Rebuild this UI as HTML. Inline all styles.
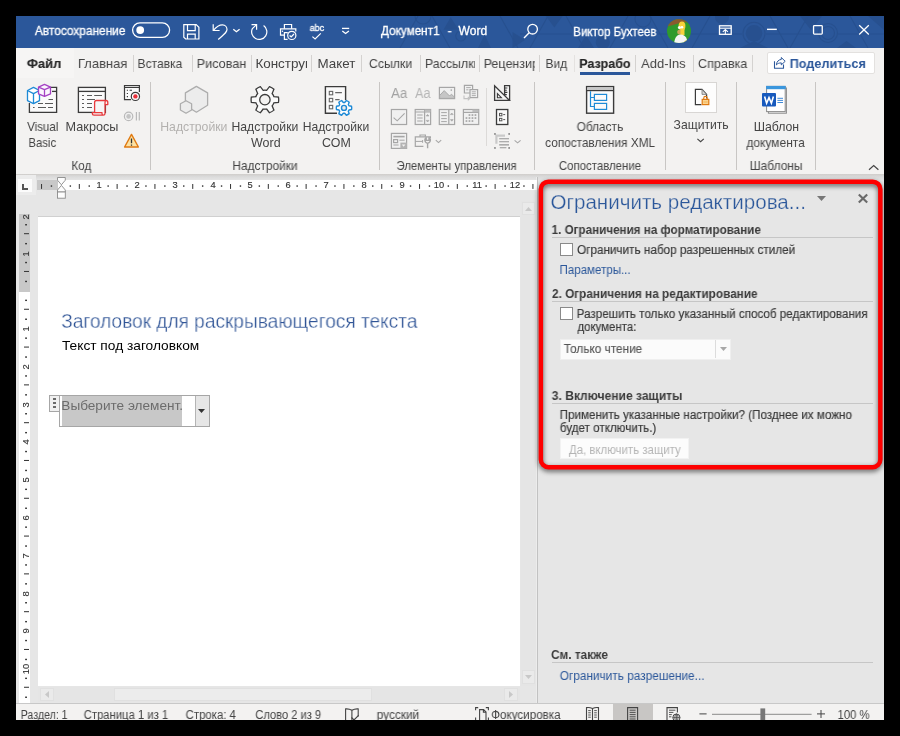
<!DOCTYPE html>
<html lang="ru"><head><meta charset="utf-8"><title>Word</title>
<style>
html,body{margin:0;padding:0;background:#000;}
body{width:900px;height:736px;overflow:hidden;font-family:"Liberation Sans",sans-serif;}
#root{position:relative;width:900px;height:736px;overflow:hidden;background:#000;}
#root div,#root span,#root svg{position:absolute;box-sizing:border-box;}
.t{will-change:transform;white-space:pre;line-height:1em;transform-origin:0 0;display:block;}
.clip{overflow:hidden;}
.vsep{width:1px;background:#c8c6c4;}
.tsep{width:1px;background:#d4d2d0;top:55px;height:17px;}
svg{overflow:visible;}
.rn{will-change:transform;font-size:9.3px;line-height:10px;height:10px;text-align:center;color:#333;display:block;-webkit-text-stroke:0.15px #333;}
.rv{transform:rotate(-90deg);transform-origin:50% 50%;}

</style></head>
<body>
<div id="root">
<!-- window -->
<div id="win" style="left:16px;top:16px;width:868px;height:704px;background:#e6e6e6;overflow:hidden"></div>
<!-- title bar -->
<div id="titlebar" style="left:16px;top:16px;width:868px;height:32px;background:#2b579a;overflow:hidden">
  <svg width="868" height="32" viewBox="16 16 868 32" style="left:0;top:0">
    <g fill="#27508f">
      <circle cx="754" cy="33.3" r="8.3"/>
      <path d="M443.5 29.7 L458.6 29.7 L450.7 17.2 Z"/>
      <path d="M478 48 L491 48 L484.6 34.8 Z"/>
      <path d="M512.5 32 L525 40 L512.5 48 Z"/>
      <path d="M545.9 16 L562.7 16 L554.3 27.6 Z"/>
      <circle cx="602.8" cy="42.4" r="7"/>
      <path d="M578 48 L594 48 L586 35 Z"/>
      <path d="M740 48 L768 48 L754 41 Z"/>
      <path d="M800 16 L822 16 L811 30 Z"/>
      <path d="M837 48 L856 48 L846.5 41 Z"/>
      <path d="M868 16 L884 16 L884 30 Z"/>
      <circle cx="722" cy="17" r="7"/>
    </g>
    <g fill="none" stroke="#27508f" stroke-width="1.1">
      <circle cx="828" cy="33" r="9.5"/><circle cx="828" cy="33" r="6.5"/>
      <circle cx="643" cy="19" r="8"/><circle cx="423" cy="16" r="8"/><circle cx="460.8" cy="36" r="5"/>
      <circle cx="754" cy="33.3" r="11"/>
      <path d="M400 48 L418 16 M432 16 L450 48 M500 16 L518 48 M530 48 L548 16 M566 16 L584 48 M610 48 L628 16 M650 16 L668 48 M692 48 L710 16 M770 16 L788 48 M790 48 L808 16 M850 16 L868 48 M520 34 L572 34 M656 34 L742 34 M766 34 L818 34 M838 34 L884 34"/>
    </g>
  </svg>
</div>
<!-- tab row + ribbon -->
<div id="ribbon" style="left:16px;top:48px;width:868px;height:126px;background:#f3f2f1"></div>
<div id="ribshadow" style="left:16px;top:174px;width:868px;height:6px;background:linear-gradient(#cfcdcb,#dcdcdc 50%,#e4e4e4)"></div>
<div id="filetab" style="left:16px;top:48px;width:58px;height:30px;background:#f6f5f4"></div>
<!-- tab separators -->
<div class="tsep" style="left:133px"></div>
<div class="tsep" style="left:192px"></div>
<div class="tsep" style="left:251px"></div>
<div class="tsep" style="left:311px"></div>
<div class="tsep" style="left:361px"></div>
<div class="tsep" style="left:420px"></div>
<div class="tsep" style="left:479px"></div>
<div class="tsep" style="left:539px"></div>
<div class="tsep" style="left:574px;background:#e4e2e0"></div>
<div class="tsep" style="left:635px"></div>
<div class="tsep" style="left:693px"></div>
<div class="tsep" style="left:752px"></div>
<!-- active tab underline -->
<div style="left:580px;top:72px;width:50px;height:3px;background:#2b579a"></div>
<!-- share button -->
<div style="left:767px;top:52px;width:108px;height:22px;background:#fff;border:1px solid #e3e1df;border-radius:2px"></div>
<!-- ribbon group separators -->
<div class="vsep" style="left:150px;top:82px;height:88px"></div>
<div class="vsep" style="left:379px;top:82px;height:88px"></div>
<div class="vsep" style="left:534px;top:82px;height:88px"></div>
<div class="vsep" style="left:665px;top:82px;height:88px"></div>
<div class="vsep" style="left:736px;top:82px;height:88px"></div>
<div class="vsep" style="left:815px;top:82px;height:88px"></div>
<div class="vsep" style="left:486px;top:88px;height:58px;background:#dcdad8"></div>
<!-- protect button box -->
<div style="left:685px;top:82px;width:32px;height:31px;background:#fdfdfd;border:1px solid #d8d6d4"></div>

<!-- document page -->
<div id="page" style="left:38px;top:216px;width:482px;height:470px;background:#fff;border-top:1px solid #d0d0d0"></div>
<!-- vertical scrollbar -->
<div style="left:521px;top:201px;width:15px;height:485px;background:#e5e5e5"></div>
<div style="left:522px;top:202px;width:13px;height:13px;background:#eaeaea;border:1px solid #e0e0e0"></div>
<div style="left:522px;top:670px;width:13px;height:14px;background:#eaeaea;border:1px solid #e0e0e0"></div>
<svg width="7" height="4" viewBox="0 0 7 4" style="left:525px;top:207px"><path d="M0 4 L3.5 0 L7 4Z" fill="#c8c8c8"/></svg>
<svg width="7" height="4" viewBox="0 0 7 4" style="left:525px;top:675px"><path d="M0 0 L3.5 4 L7 0Z" fill="#c8c8c8"/></svg>
<!-- horizontal scrollbar -->
<div style="left:38px;top:687px;width:482px;height:15px;background:#e5e5e5"></div>
<div style="left:40px;top:688px;width:14px;height:13px;background:#eaeaea;border:1px solid #e0e0e0"></div>
<div style="left:504px;top:688px;width:14px;height:13px;background:#eaeaea;border:1px solid #e0e0e0"></div>
<svg width="4" height="7" viewBox="0 0 4 7" style="left:45px;top:691px"><path d="M4 0 L0 3.5 L4 7Z" fill="#c8c8c8"/></svg>
<svg width="4" height="7" viewBox="0 0 4 7" style="left:509px;top:691px"><path d="M0 0 L4 3.5 L0 7Z" fill="#c8c8c8"/></svg>
<div style="left:114px;top:688px;width:258px;height:13px;background:#ececec;border:1px solid #e0e0e0"></div>
<!-- pane divider -->
<div style="left:536px;top:177px;width:1px;height:526px;background:#ececec"></div>
<div style="left:537px;top:177px;width:1px;height:526px;background:#c2c2c2"></div>

<!-- content control -->
<div style="left:59px;top:395px;width:151px;height:32px;background:#fff;border:1px solid #a6a6a6"></div>
<div style="left:62px;top:396px;width:120px;height:30px;background:#c8c8c8"></div>
<div style="left:195px;top:396px;width:14px;height:30px;background:#e6e6e6;border-left:1px solid #b4b4b4"></div>
<svg width="7" height="4" viewBox="0 0 7 4" style="left:198px;top:409px"><path d="M0 0 L7 0 L3.5 4Z" fill="#333"/></svg>
<div style="left:49px;top:395px;width:11px;height:17px;background:#f0f0f0;border:1px solid #a6a6a6"></div>
<div style="left:52.6px;top:398px;width:3px;height:2px;background:#6a6a6a"></div>
<div style="left:52.6px;top:402px;width:3px;height:2px;background:#6a6a6a"></div>
<div style="left:52.6px;top:406px;width:3px;height:2px;background:#6a6a6a"></div>

<!-- pane controls -->
<div style="left:552px;top:237px;width:321px;height:1px;background:#c6c6c6"></div>
<div style="left:552px;top:301px;width:321px;height:1px;background:#c6c6c6"></div>
<div style="left:552px;top:403px;width:321px;height:1px;background:#c6c6c6"></div>
<div style="left:552px;top:662px;width:321px;height:1px;background:#c6c6c6"></div>
<div style="left:560px;top:243px;width:13px;height:13px;background:#fff;border:1px solid #8a8a8a"></div>
<div style="left:560px;top:307px;width:13px;height:13px;background:#fff;border:1px solid #8a8a8a"></div>
<div style="left:560px;top:338.6px;width:171px;height:21px;background:#fbfbfb;border:1px solid #efefef"></div>
<div style="left:715px;top:340px;width:1px;height:18px;background:#dcdcdc"></div>
<svg width="7" height="4" viewBox="0 0 7 4" style="left:720px;top:347px"><path d="M0 0 L7 0 L3.5 4Z" fill="#a8a8a8"/></svg>
<div style="left:560.4px;top:437.5px;width:128.6px;height:21.8px;background:#fcfcfc;border:1px solid #f2f2f2"></div>
<!-- pane header glyphs -->
<svg width="9" height="5" viewBox="0 0 9 5" style="left:817px;top:196px"><path d="M0 0 L9 0 L4.5 5Z" fill="#777"/></svg>
<svg width="10" height="9" viewBox="0 0 10 9" style="left:858px;top:193.5px"><path d="M0.8 0.5 L9.2 8.5 M9.2 0.5 L0.8 8.5" stroke="#6a6a6a" stroke-width="2.15" fill="none"/></svg>

<!-- status bar -->
<div id="status" style="left:16px;top:703px;width:868px;height:17px;background:#f3f2f1;border-top:1px solid #c8c8c8"></div>
<div style="left:613px;top:704px;width:40px;height:16px;background:#c8c6c4"></div>

<div style="left:19px;top:214px;width:11px;height:77.5px;background:#c8c8c8"></div>
<div style="left:19px;top:291.5px;width:11px;height:411.5px;background:#fff"></div>
<div style="left:16px;top:175px;width:20px;height:20px;background:#ececec"></div>
<div style="left:18px;top:179px;width:14px;height:13px;background:#fbfbfb"></div>
<div style="left:22px;top:184px;width:1.8px;height:5.6px;background:#555"></div>
<div style="left:22px;top:188.1px;width:5.9px;height:1.5px;background:#555"></div>
<div style="left:37px;top:180px;width:21px;height:9.6px;background:#c8c8c8"></div>
<div style="left:58px;top:180px;width:479px;height:9.6px;background:#fff"></div>
<svg width="900" height="736" viewBox="0 0 900 736" style="left:0;top:0" fill="none">
<rect x="41.00" y="184" width="1.05" height="4.9" fill="#3a3a3a"/>
<rect x="50.75" y="185.3" width="1.4" height="1.5" fill="#3a3a3a"/>
<rect x="69.65" y="185.3" width="1.4" height="1.5" fill="#3a3a3a"/>
<rect x="78.80" y="184" width="1.05" height="4.9" fill="#3a3a3a"/>
<rect x="88.55" y="185.3" width="1.4" height="1.5" fill="#3a3a3a"/>
<rect x="107.45" y="185.3" width="1.4" height="1.5" fill="#3a3a3a"/>
<rect x="116.60" y="184" width="1.05" height="4.9" fill="#3a3a3a"/>
<rect x="126.35" y="185.3" width="1.4" height="1.5" fill="#3a3a3a"/>
<rect x="145.25" y="185.3" width="1.4" height="1.5" fill="#3a3a3a"/>
<rect x="154.40" y="184" width="1.05" height="4.9" fill="#3a3a3a"/>
<rect x="164.15" y="185.3" width="1.4" height="1.5" fill="#3a3a3a"/>
<rect x="183.05" y="185.3" width="1.4" height="1.5" fill="#3a3a3a"/>
<rect x="192.20" y="184" width="1.05" height="4.9" fill="#3a3a3a"/>
<rect x="201.95" y="185.3" width="1.4" height="1.5" fill="#3a3a3a"/>
<rect x="220.85" y="185.3" width="1.4" height="1.5" fill="#3a3a3a"/>
<rect x="230.00" y="184" width="1.05" height="4.9" fill="#3a3a3a"/>
<rect x="239.75" y="185.3" width="1.4" height="1.5" fill="#3a3a3a"/>
<rect x="258.65" y="185.3" width="1.4" height="1.5" fill="#3a3a3a"/>
<rect x="267.80" y="184" width="1.05" height="4.9" fill="#3a3a3a"/>
<rect x="277.55" y="185.3" width="1.4" height="1.5" fill="#3a3a3a"/>
<rect x="296.45" y="185.3" width="1.4" height="1.5" fill="#3a3a3a"/>
<rect x="305.60" y="184" width="1.05" height="4.9" fill="#3a3a3a"/>
<rect x="315.35" y="185.3" width="1.4" height="1.5" fill="#3a3a3a"/>
<rect x="334.25" y="185.3" width="1.4" height="1.5" fill="#3a3a3a"/>
<rect x="343.40" y="184" width="1.05" height="4.9" fill="#3a3a3a"/>
<rect x="353.15" y="185.3" width="1.4" height="1.5" fill="#3a3a3a"/>
<rect x="372.05" y="185.3" width="1.4" height="1.5" fill="#3a3a3a"/>
<rect x="381.20" y="184" width="1.05" height="4.9" fill="#3a3a3a"/>
<rect x="390.95" y="185.3" width="1.4" height="1.5" fill="#3a3a3a"/>
<rect x="409.85" y="185.3" width="1.4" height="1.5" fill="#3a3a3a"/>
<rect x="419.00" y="184" width="1.05" height="4.9" fill="#3a3a3a"/>
<rect x="428.75" y="185.3" width="1.4" height="1.5" fill="#3a3a3a"/>
<rect x="447.65" y="185.3" width="1.4" height="1.5" fill="#3a3a3a"/>
<rect x="456.80" y="184" width="1.05" height="4.9" fill="#3a3a3a"/>
<rect x="466.55" y="185.3" width="1.4" height="1.5" fill="#3a3a3a"/>
<rect x="485.45" y="185.3" width="1.4" height="1.5" fill="#3a3a3a"/>
<rect x="494.60" y="184" width="1.05" height="4.9" fill="#3a3a3a"/>
<rect x="504.35" y="185.3" width="1.4" height="1.5" fill="#3a3a3a"/>
<rect x="523.25" y="185.3" width="1.4" height="1.5" fill="#3a3a3a"/>
<rect x="532.40" y="184" width="1.05" height="4.9" fill="#3a3a3a"/>
<rect x="25.1" y="224.05" width="1.9" height="1.4" fill="#3a3a3a"/>
<rect x="24" y="233.15" width="5" height="1.05" fill="#3a3a3a"/>
<rect x="25.1" y="242.95" width="1.9" height="1.4" fill="#3a3a3a"/>
<rect x="25.1" y="261.85" width="1.9" height="1.4" fill="#3a3a3a"/>
<rect x="24" y="270.95" width="5" height="1.05" fill="#3a3a3a"/>
<rect x="25.1" y="280.75" width="1.9" height="1.4" fill="#3a3a3a"/>
<rect x="25.1" y="299.65" width="1.9" height="1.4" fill="#3a3a3a"/>
<rect x="24" y="308.75" width="5" height="1.05" fill="#3a3a3a"/>
<rect x="25.1" y="318.55" width="1.9" height="1.4" fill="#3a3a3a"/>
<rect x="25.1" y="337.45" width="1.9" height="1.4" fill="#3a3a3a"/>
<rect x="24" y="346.55" width="5" height="1.05" fill="#3a3a3a"/>
<rect x="25.1" y="356.35" width="1.9" height="1.4" fill="#3a3a3a"/>
<rect x="25.1" y="375.25" width="1.9" height="1.4" fill="#3a3a3a"/>
<rect x="24" y="384.35" width="5" height="1.05" fill="#3a3a3a"/>
<rect x="25.1" y="394.15" width="1.9" height="1.4" fill="#3a3a3a"/>
<rect x="25.1" y="413.05" width="1.9" height="1.4" fill="#3a3a3a"/>
<rect x="24" y="422.15" width="5" height="1.05" fill="#3a3a3a"/>
<rect x="25.1" y="431.95" width="1.9" height="1.4" fill="#3a3a3a"/>
<rect x="25.1" y="450.85" width="1.9" height="1.4" fill="#3a3a3a"/>
<rect x="24" y="459.95" width="5" height="1.05" fill="#3a3a3a"/>
<rect x="25.1" y="469.75" width="1.9" height="1.4" fill="#3a3a3a"/>
<rect x="25.1" y="488.65" width="1.9" height="1.4" fill="#3a3a3a"/>
<rect x="24" y="497.75" width="5" height="1.05" fill="#3a3a3a"/>
<rect x="25.1" y="507.55" width="1.9" height="1.4" fill="#3a3a3a"/>
<rect x="25.1" y="526.45" width="1.9" height="1.4" fill="#3a3a3a"/>
<rect x="24" y="535.55" width="5" height="1.05" fill="#3a3a3a"/>
<rect x="25.1" y="545.35" width="1.9" height="1.4" fill="#3a3a3a"/>
<rect x="25.1" y="564.25" width="1.9" height="1.4" fill="#3a3a3a"/>
<rect x="24" y="573.35" width="5" height="1.05" fill="#3a3a3a"/>
<rect x="25.1" y="583.15" width="1.9" height="1.4" fill="#3a3a3a"/>
<rect x="25.1" y="602.05" width="1.9" height="1.4" fill="#3a3a3a"/>
<rect x="24" y="611.15" width="5" height="1.05" fill="#3a3a3a"/>
<rect x="25.1" y="620.95" width="1.9" height="1.4" fill="#3a3a3a"/>
<rect x="25.1" y="639.85" width="1.9" height="1.4" fill="#3a3a3a"/>
<rect x="24" y="648.95" width="5" height="1.05" fill="#3a3a3a"/>
<rect x="25.1" y="658.75" width="1.9" height="1.4" fill="#3a3a3a"/>
<rect x="25.1" y="677.65" width="1.9" height="1.4" fill="#3a3a3a"/>
<rect x="24" y="686.75" width="5" height="1.05" fill="#3a3a3a"/>
<rect x="25.1" y="696.55" width="1.9" height="1.4" fill="#3a3a3a"/>
<path d="M57.5 177.5 H65.3 V180.2 L61.4 184.8 L57.5 180.2 Z" fill="#fdfdfd" stroke="#8a8a8a" stroke-width="0.9"/>
<path d="M61.4 185.4 L65.3 190 V192 H57.5 V190 Z" fill="#fdfdfd" stroke="#8a8a8a" stroke-width="0.9"/>
<rect x="57.5" y="192" width="7.8" height="6.2" fill="#fdfdfd" stroke="#8a8a8a" stroke-width="0.9"/>
</svg>
<span class="rn" style="left:89.20px;top:180.3px;width:20px">1</span>
<span class="rn" style="left:127.00px;top:180.3px;width:20px">2</span>
<span class="rn" style="left:164.80px;top:180.3px;width:20px">3</span>
<span class="rn" style="left:202.60px;top:180.3px;width:20px">4</span>
<span class="rn" style="left:240.40px;top:180.3px;width:20px">5</span>
<span class="rn" style="left:278.20px;top:180.3px;width:20px">6</span>
<span class="rn" style="left:316.00px;top:180.3px;width:20px">7</span>
<span class="rn" style="left:353.80px;top:180.3px;width:20px">8</span>
<span class="rn" style="left:391.60px;top:180.3px;width:20px">9</span>
<span class="rn" style="left:429.40px;top:180.3px;width:20px">10</span>
<span class="rn" style="left:467.20px;top:180.3px;width:20px">11</span>
<span class="rn" style="left:505.00px;top:180.3px;width:20px">12</span>
<span class="rn rv" style="left:15.60px;top:211.70px;width:20px">2</span>
<span class="rn rv" style="left:15.60px;top:248.90px;width:20px">1</span>
<span class="rn rv" style="left:15.60px;top:324.00px;width:20px">1</span>
<span class="rn rv" style="left:15.60px;top:361.80px;width:20px">2</span>
<span class="rn rv" style="left:15.60px;top:399.60px;width:20px">3</span>
<span class="rn rv" style="left:15.60px;top:437.40px;width:20px">4</span>
<span class="rn rv" style="left:15.60px;top:475.20px;width:20px">5</span>
<span class="rn rv" style="left:15.60px;top:513.00px;width:20px">6</span>
<span class="rn rv" style="left:15.60px;top:550.80px;width:20px">7</span>
<span class="rn rv" style="left:15.60px;top:588.60px;width:20px">8</span>
<span class="rn rv" style="left:15.60px;top:626.40px;width:20px">9</span>
<span class="rn rv" style="left:15.60px;top:664.20px;width:20px">10</span>
<svg id="ic-title" width="900" height="736" viewBox="0 0 900 736" style="left:0;top:0" fill="none" stroke="#fff" stroke-width="1.2" stroke-linecap="butt" stroke-linejoin="miter">
  <!-- autosave toggle -->
  <rect x="132.6" y="22.8" width="37" height="14.6" rx="7.3" stroke-width="1.3"/>
  <circle cx="140.2" cy="30.1" r="3.9" fill="#fff" stroke="none"/>
  <!-- save -->
  <path d="M183.8 24.6 H196.2 L198.9 27.3 V39 H185.6 L183.8 37.2 Z"/>
  <path d="M187.5 24.6 V30.6 H195.2 V24.6"/>
  <path d="M187.5 39 V34.2 H195.2 V39"/>
  <!-- undo -->
  <path d="M213.2 24.2 V30.5 H219.6"/>
  <path d="M213.4 30.3 C216 27.2 219 24.9 222.4 24.9 C225.4 24.9 227 27.2 227 29.6 C227 32.2 225 33.6 218.2 39.5"/>
  <path d="M233.3 29.2 L236.4 31.7 L239.6 29.2" stroke-width="1.3"/>
  <!-- redo -->
  <path d="M251.5 24.7 H256.6 V29.8"/>
  <path d="M263.6 25.6 A7.6 7.6 0 1 1 252.4 28.5 L256.4 24.9"/>
  <!-- print preview -->
  <path d="M284.4 28.7 V24.5 H291.6 V28.7"/>
  <path d="M284.4 35.2 H280.5 V28.8 H295.8 V31.4"/>
  <path d="M287.6 39.4 H284.4 V32.6 H287.8"/>
  <rect x="281.8" y="30.6" width="1.3" height="1.3" fill="#fff" stroke="none"/>
  <circle cx="291.8" cy="35.4" r="4.1"/>
  <path d="M289.6 35.5 L291.2 37 L294 34"/>
  <!-- abc check -->
  <path d="M312.4 36.6 L315.1 39 L320.8 33.4" stroke-width="1.2"/>
  <!-- customize QAT -->
  <path d="M342 28.4 H349.2" stroke-width="1.3"/>
  <path d="M342.3 30.9 L345.6 33.5 L348.9 30.9" stroke-width="1.3"/>
  <!-- search -->
  <circle cx="532.6" cy="29.2" r="4.8" stroke-width="1.3"/>
  <path d="M529.2 32.8 L524 38" stroke-width="1.4"/>
  <!-- ribbon display options -->
  <rect x="719.5" y="25.8" width="11.7" height="8.5" stroke-width="1.3"/>
  <path d="M719.5 28.2 H731.2" stroke-width="1.1"/>
  <path d="M725.35 34 V29.8 M722.8 31.9 L725.35 29.6 L727.9 31.9" stroke-width="1.1"/>
  <!-- min / max / close -->
  <path d="M767 29.35 H776.8" stroke-width="1.4"/>
  <rect x="813.55" y="25.55" width="8.7" height="8.5" rx="0.8" stroke-width="1.3"/>
  <path d="M859.2 25.2 L868.8 34.5 M868.8 25.2 L859.2 34.5" stroke-width="1.3"/>
</svg>
<!-- avatar -->
<svg width="24" height="24" viewBox="667 19 24 24" style="left:667px;top:19px">
  <defs><clipPath id="avc"><circle cx="679" cy="31" r="12"/></clipPath></defs>
  <g clip-path="url(#avc)">
    <rect x="667" y="19" width="24" height="24" fill="#2e9a2c"/>
    <path d="M667 19 H691 V23 Q684 21.2 678 23.6 Q672 25.6 667 26.6 Z" fill="#8a5a2e"/>
    <ellipse cx="682" cy="26" rx="3.4" ry="4.6" fill="#f6d13a"/>
    <ellipse cx="680.2" cy="32" rx="3" ry="2.6" fill="#c8a55a"/>
    <rect x="680.5" y="29" width="4" height="6" fill="#f6d13a"/>
    <circle cx="679.4" cy="27.4" r="1.5" fill="#fff"/>
    <circle cx="682" cy="27.2" r="1.3" fill="#fff"/>
    <path d="M674 43 Q675 35 680 34.5 Q686 34.5 687 40 L687 43 Z" fill="#f4f4f4"/>
    <path d="M683.5 43 Q684 40.5 686.8 40 L687 43Z" fill="#f6d13a"/>
  </g>
</svg>

<svg id="ic-ribbon" width="900" height="736" viewBox="0 0 900 736" style="left:0;top:0" fill="none" stroke-linecap="butt" stroke-linejoin="miter">
<g stroke="#3b3b3b" stroke-width="1.3">
<path d="M40 87.4 H56.6 V112.4 H29.4 V103" fill="#fafafa"/>
<path d="M52 91.4 H56.6"/>
<path d="M48.5 99.5 H53 M38 103.5 H43 M45 103.5 H53 M33 107.5 H34.6 M38 107.5 H46 M48 107.5 H53" stroke="#5a5a5a" stroke-width="1.1"/>
</g>
<g stroke="#1e8ad6" stroke-width="1.3" stroke-linejoin="round">
<path d="M33.5 87.4 L39.5 90.5 V100.7 L33.5 103.6 L27.5 100.7 V90.5 Z" fill="#fff"/>
<path d="M27.5 90.5 L33.5 93.6 L39.5 90.5 M33.5 93.6 V103.6"/>
</g>
<g stroke="#a542c4" stroke-width="1.3" stroke-linejoin="round">
<path d="M44.5 84.3 L50.5 87.1 V93.9 L44.5 96.4 L38.5 93.9 V87.1 Z" fill="#fbf6fd"/>
<path d="M38.5 87.1 L44.5 89.7 L50.5 87.1 M44.5 89.7 V96.4"/>
</g>
<g stroke="#3b3b3b" stroke-width="1.3">
<rect x="78.4" y="87.4" width="27" height="25" fill="#fafafa"/>
<path d="M78.4 91.4 H105.4"/>
<path d="M82 95.5 H84 M87 95.5 H92 M94.2 95.5 H102 M82 99.5 H84 M87 99.5 H95 M82 103.5 H84 M87 103.5 H92 M82 107.5 H84 M87 107.5 H92" stroke="#5a5a5a" stroke-width="1.1"/>
</g>
<g stroke="#e8393c" stroke-width="1.3" stroke-linejoin="round">
<path d="M94.6 112.6 V102.4 Q94.6 100.5 96.5 100.5 H106 Q107.8 100.5 107.8 102.4 V104.6 H105 V113.4 Q105 115.2 103.2 115.2 H94 Q92.3 115.2 92.3 113.6 V112.6 H102 V113.6 Q102 115.2 103.2 115.2" fill="#f7f5f5"/>
<path d="M105 104.6 V102.4 Q105 100.5 106 100.5"/>
</g>
<g stroke="#3b3b3b" stroke-width="1.2">
<path d="M131 99.6 H124.5 V85.5 H139.4 V92" fill="#fafafa"/>
<path d="M124.5 87.4 H139.4"/>
<path d="M126.8 90.3 H128 M129.6 90.3 H132 M126.8 93.5 H128 M126.8 96.6 H128" stroke-width="1.1"/>
<circle cx="135.4" cy="96.4" r="4.1" fill="#fff"/>
<circle cx="135.4" cy="96.4" r="2.2" fill="#e8303a" stroke="none"/>
</g>
<g stroke="#b9b9b9" stroke-width="1.2">
<circle cx="128.6" cy="116.4" r="4.2" fill="#f0f0f0"/>
<circle cx="128.6" cy="116.4" r="2.3" fill="#c4c4c4" stroke="none"/>
<path d="M136.4 112 V120.6 M139.3 112 V120.6"/>
</g>
<path d="M131.5 134.4 L138.4 147 H124.6 Z" fill="#fbe2a4" stroke="#e07a12" stroke-width="1.4" stroke-linejoin="round"/>
<path d="M131.5 138.6 V143.2 M131.5 144.4 V145.8" stroke="#333" stroke-width="1.3"/>
<g stroke="#adadad" stroke-width="1.3" fill="#ececec" stroke-linejoin="round">
<path d="M196.4 86.4 L207.6 92.9 V105.3 L196.4 112.2 L185.4 105.3 V92.9 Z"/>
<path d="M186 100.7 L191.6 103.8 V110 L186 113.2 L180.4 110 V103.8 Z"/>
</g>
<path d="M273.86 96.53 L278.45 97.09 A13.80 13.80 0 0 1 278.45 102.31 L273.86 102.87 A9.50 9.50 0 0 1 272.12 105.87 L273.93 110.13 A13.80 13.80 0 0 1 269.42 112.74 L266.63 109.04 A9.50 9.50 0 0 1 263.17 109.04 L260.38 112.74 A13.80 13.80 0 0 1 255.87 110.13 L257.68 105.87 A9.50 9.50 0 0 1 255.94 102.87 L251.35 102.31 A13.80 13.80 0 0 1 251.35 97.09 L255.94 96.53 A9.50 9.50 0 0 1 257.68 93.53 L255.87 89.27 A13.80 13.80 0 0 1 260.38 86.66 L263.17 90.36 A9.50 9.50 0 0 1 266.63 90.36 L269.42 86.66 A13.80 13.80 0 0 1 273.93 89.27 L272.12 93.53 A9.50 9.50 0 0 1 273.86 96.53 Z" fill="#fafafa" stroke="#3b3b3b" stroke-width="1.3" stroke-linejoin="miter"/>
<circle cx="264.9" cy="99.7" r="5.2" fill="#f3f2f1" stroke="#3b3b3b" stroke-width="1.3"/>
<path d="M337 113.2 H325.4 V86.6 H345.6 V100" fill="#fafafa" stroke="#3b3b3b" stroke-width="1.4"/>
<g stroke="#666" stroke-width="1.1">
<rect x="329.3" y="91.4" width="3.4" height="3.4"/><rect x="329.3" y="98.4" width="3.4" height="3.4"/><rect x="329.3" y="105.4" width="3.4" height="3.4"/>
<path d="M335.2 92.6 H341.9 M335.2 99.6 H339.6"/>
</g>
<path d="M348.97 105.80 L351.53 106.29 A7.70 7.70 0 0 1 351.53 109.51 L348.97 110.00 A5.40 5.40 0 0 1 348.31 111.16 L349.16 113.62 A7.70 7.70 0 0 1 346.38 115.22 L344.67 113.26 A5.40 5.40 0 0 1 343.33 113.26 L341.62 115.22 A7.70 7.70 0 0 1 338.84 113.62 L339.69 111.16 A5.40 5.40 0 0 1 339.03 110.00 L336.47 109.51 A7.70 7.70 0 0 1 336.47 106.29 L339.03 105.80 A5.40 5.40 0 0 1 339.69 104.64 L338.84 102.18 A7.70 7.70 0 0 1 341.62 100.58 L343.33 102.54 A5.40 5.40 0 0 1 344.67 102.54 L346.38 100.58 A7.70 7.70 0 0 1 349.16 102.18 L348.31 104.64 A5.40 5.40 0 0 1 348.97 105.80 Z" fill="#fdfdfd" stroke="#1e8ad6" stroke-width="1.4" stroke-linejoin="round"/>
<circle cx="344" cy="107.9" r="2.5" fill="#eaeaea" stroke="#1e8ad6" stroke-width="1.4"/>
<g stroke="#a6a6a6" stroke-width="1.2" fill="none">
<rect x="439.4" y="87.4" width="15.2" height="11.2" fill="#f0f0f0"/>
<path d="M439.6 95.5 L444.2 90.6 L449.6 96 L451.4 94.2 L454.4 97 V98.4 H439.6 Z" fill="#c6c6c6" stroke-width="0.9"/>
<rect x="450.6" y="89.4" width="1.4" height="1.4" fill="#a6a6a6" stroke="none"/>
<path d="M469.8 93 H464.4 V85.4 H472.6 V89.4" fill="#f0f0f0"/>
<path d="M466.2 87.6 H470.8 M466.2 89.8 H468.4" stroke-width="0.9"/>
<rect x="470" y="89.6" width="7.6" height="8" fill="#f0f0f0"/>
<path d="M471.8 91.8 H475.8 M471.8 93.7 H475.8 M471.8 95.6 H475.8" stroke-width="0.9"/>
<path d="M464 95.4 V98.6 H469.6 M467.8 96.8 L469.8 98.6 L467.8 100.4" stroke="#c2c2c2" stroke-width="1.1"/>
<rect x="391.4" y="109.5" width="15.2" height="15" fill="#f0f0f0"/>
<path d="M393.6 117.6 L397.2 120.8 L404.6 113.4" stroke-width="1.1"/>
<rect x="415.2" y="109.5" width="15.4" height="15" fill="#f0f0f0"/>
<path d="M415.2 112 H430.6 M424.6 109.5 V124.5"/>
<rect x="424.8" y="109.6" width="5.6" height="2.4" fill="#bdbdbd" stroke="none"/>
<path d="M417.2 115 H422.6 M417.2 118 H422.6 M417.2 121 H422.6" stroke-width="1"/>
<path d="M426.2 116 L427.6 114.4 L429 116 Z M426.2 120.4 L427.6 122 L429 120.4 Z" fill="#a6a6a6" stroke-width="0.6"/>
<rect x="439.3" y="109.5" width="15.3" height="15" fill="#f0f0f0"/>
<path d="M448.8 109.5 V124.5"/>
<path d="M441.2 112.6 H446.8 M441.2 115.6 H446.8 M441.2 118.6 H446.8 M441.2 121.6 H446.8" stroke-width="1"/>
<path d="M450.4 114.6 L451.8 113 L453.2 114.6 Z M450.4 119.6 L451.8 121.2 L453.2 119.6 Z" fill="#a6a6a6" stroke-width="0.6"/>
<rect x="463.4" y="109.5" width="15.3" height="15" fill="#f0f0f0"/>
<path d="M463.4 112.4 H478.7"/>
<rect x="472.4" y="109.6" width="6" height="2.6" fill="#bdbdbd" stroke="none"/>
<rect x="468.6" y="114.2" width="1.7" height="1.7" fill="#a6a6a6" stroke="none"/>
<rect x="471.6" y="114.2" width="1.7" height="1.7" fill="#a6a6a6" stroke="none"/>
<rect x="474.6" y="114.2" width="1.7" height="1.7" fill="#a6a6a6" stroke="none"/>
<rect x="465.6" y="117.2" width="1.7" height="1.7" fill="#a6a6a6" stroke="none"/>
<rect x="468.6" y="117.2" width="1.7" height="1.7" fill="#a6a6a6" stroke="none"/>
<rect x="471.6" y="117.2" width="1.7" height="1.7" fill="#a6a6a6" stroke="none"/>
<rect x="474.6" y="117.2" width="1.7" height="1.7" fill="#a6a6a6" stroke="none"/>
<rect x="465.6" y="120.2" width="1.7" height="1.7" fill="#a6a6a6" stroke="none"/>
<rect x="468.6" y="120.2" width="1.7" height="1.7" fill="#a6a6a6" stroke="none"/>
<rect x="471.6" y="120.2" width="1.7" height="1.7" fill="#a6a6a6" stroke="none"/>
<rect x="391.4" y="133.4" width="15.2" height="15" fill="#f0f0f0"/>
<path d="M393.4 136.6 H404.6" stroke-width="1.6"/>
<rect x="393.6" y="139.6" width="4" height="3"/>
<path d="M393.4 145 H398.6 M399.4 140.2 H404.6" stroke-width="1"/>
<rect x="400.4" y="142.6" width="6.4" height="6" fill="#b4b4b4" stroke="none"/>
<path d="M401.8 144.4 H405.4 L403.6 146.8 Z" fill="#f3f2f1" stroke="none"/>
<path d="M423.4 146.4 H415.3 V136.8 H430.4 V138"/>
<path d="M420 136.8 V135 H425.4 V136.8"/>
<path d="M415.3 141.4 H422.6 M422.6 140 V142.8" stroke-width="1"/>
<path d="M427.6 148.2 V143.4 Q424.6 142.4 424.9 139.6 Q425.1 138.2 426.2 137.6 V140.4 H429 V137.6 Q430.2 138.2 430.4 139.6 Q430.6 142.4 427.6 143.4" stroke-width="1.4" stroke-linejoin="round"/>
<path d="M435.8 140.1 L438.5 142.6 L441.2 140.1" stroke-width="1.1"/>
<path d="M499.2 138.7 H509 M499.2 141.8 H509 M499.2 144.9 H509 M499.8 147.7 H506.4" stroke="#959595" stroke-width="1.1"/>
<path d="M505 135.6 H496.4 V143.8" stroke="#c9c9c9" stroke-width="2.2"/>
<rect x="494.1" y="133.1" width="1.7" height="1.7" fill="#8a8a8a" stroke="none"/>
<rect x="508.3" y="133.1" width="1.7" height="1.7" fill="#8a8a8a" stroke="none"/>
<rect x="494.1" y="147.1" width="1.7" height="1.7" fill="#8a8a8a" stroke="none"/>
<rect x="508.3" y="147.1" width="1.7" height="1.7" fill="#8a8a8a" stroke="none"/>
<path d="M514.6 140.4 L517.6 142.9 L520.6 140.4" stroke-width="1.1"/>
</g>
<g stroke="#3b3b3b" stroke-width="1.3" stroke-linejoin="miter">
<path d="M504.6 95.6 V85.6 H509.6 V100.4" fill="#fafafa"/>
<path d="M504.6 88 H507.4 M504.6 90.2 H506.8 M504.6 92.4 H507.4 M504.6 94.6 H506.8" stroke-width="1.1"/>
<path d="M494.6 85.8 V100.4 H509.4 Z" fill="#f6f6f6"/>
<path d="M497.4 93.6 V97.7 H501.4 Z" stroke-width="1.1"/>
</g>
<rect x="496.5" y="109.5" width="11.3" height="15" fill="#fafafa" stroke="#3b3b3b" stroke-width="1.3"/>
<g stroke="#555" stroke-width="1"><rect x="499.5" y="113.4" width="2.4" height="2.4"/><rect x="499.5" y="118.4" width="2.4" height="2.4"/><path d="M503.2 114.6 H505.2 M503.2 119.6 H505.2"/></g>
<rect x="586.6" y="86.6" width="27" height="26.6" fill="#fafafa" stroke="#3b3b3b" stroke-width="1.4"/>
<rect x="587.3" y="87.3" width="25.6" height="2.8" fill="#c8c8c8"/>
<path d="M586.6 90.6 H613.6" stroke="#3b3b3b" stroke-width="1.2"/>
<g stroke="#1e8ad6" stroke-width="1.2"><path d="M590.5 91.2 V106.5 H594.4 M590.5 97.5 H594.4"/><rect x="594.4" y="94.4" width="12.2" height="6"/><rect x="594.4" y="103.4" width="12.2" height="6"/></g>
<path d="M701.4 104.6 H695.4 V89.4 H702 L706.6 94.4 V98.6" stroke="#3b3b3b" stroke-width="1.2"/>
<path d="M702 89.4 V94.4 H706.6 Z" fill="#d6d6d6" stroke="#777" stroke-width="0.8"/>
<rect x="702.2" y="99.4" width="6.6" height="5.2" fill="#fbd591" stroke="#e07a12" stroke-width="1.2"/>
<path d="M703.7 99.4 V98.2 A1.8 1.8 0 0 1 707.3 98.2 V99.4" stroke="#e07a12" stroke-width="1.1"/>
<path d="M703.4 102 H707.6" stroke="#f0a848" stroke-width="0.8"/>
<path d="M697.4 138.9 L700.6 141.6 L703.8 138.9" stroke="#444" stroke-width="1.2"/>
<rect x="768.4" y="88" width="18" height="25.2" fill="#f4f4f4" stroke="#8a8a8a" stroke-width="1"/>
<rect x="766.6" y="86.4" width="18.6" height="25.2" fill="#fff" stroke="#8a8a8a" stroke-width="1"/>
<rect x="766.1" y="85.9" width="19.6" height="3.3" fill="#3a96dd"/>
<path d="M777.4 98.3 H783 M777.4 100.4 H783 M777.4 102.5 H783" stroke="#2b7cd3" stroke-width="0.9"/>
<rect x="762" y="93" width="14" height="13.6" rx="1" fill="#185abd"/>
<path d="M764.6 96.4 L766.6 103.2 L769 97.6 L771.4 103.2 L773.4 96.4" stroke="#fff" stroke-width="1.6" stroke-linejoin="miter" fill="none"/>
<path d="M869 169.8 L873.7 165.6 L878.4 169.8" stroke="#444" stroke-width="1.2"/>
<g stroke="#2b579a" stroke-width="1.1" stroke-linejoin="round"><path d="M774.5 61.2 V68.3 H783.5 V64.4"/><path d="M776.4 64.9 C776.6 61.6 778.6 59.7 781.3 59.4 V57.5 L785.2 61.3 L781.3 64.9 V62.9 C779 62.9 777.6 63.5 776.4 64.9 Z" stroke-width="1"/></g>
</svg>
<span class="t" id="t0" style="left:34px;top:24.90px;font-size:12.0px;color:#fff;transform:translateX(0.84px) scaleX(0.9916);-webkit-text-stroke:0.3px #fff;">Автосохранение</span>
<span class="t" id="t1" style="left:380px;top:25.00px;font-size:12.0px;color:#fff;transform:translateX(0.98px) scaleX(0.9779);-webkit-text-stroke:0.3px #fff;">Документ1</span>
<span class="t" id="t2" style="left:447px;top:25.00px;font-size:12.0px;color:#fff;transform:translateX(0.66px) scaleX(0.9831);-webkit-text-stroke:0.3px #fff;">-</span>
<span class="t" id="t3" style="left:458px;top:25.00px;font-size:12.0px;color:#fff;transform:translateX(0.58px) scaleX(1.0023);-webkit-text-stroke:0.3px #fff;">Word</span>
<span class="t" id="t4" style="left:573px;top:25.80px;font-size:12.2px;color:#fff;transform:translateX(0.16px) scaleX(0.9468);-webkit-text-stroke:0.3px #fff;">Виктор Бухтеев</span>
<span class="t" id="t5" style="left:309px;top:22.90px;font-size:9.5px;color:#fff;transform:translateX(0.62px) scaleX(0.9558);-webkit-text-stroke:0.3px #fff;">abc</span>
<span class="t" id="t6" style="left:26px;top:56.50px;font-size:13px;color:#262626;transform:translateX(0.86px) scaleX(0.9970);-webkit-text-stroke:0.15px #262626;font-weight:bold;">Файл</span>
<span class="t" id="t7" style="left:77px;top:56.50px;font-size:13px;color:#444444;transform:translateX(0.90px) scaleX(0.9977);">Главная</span>
<span class="t" id="t8" style="left:137px;top:56.50px;font-size:13px;color:#444444;transform:translateX(0.46px) scaleX(0.9297);">Вставка</span>
<span class="t" id="t9" style="left:196px;top:56.50px;font-size:13px;color:#444444;transform:translateX(0.65px) scaleX(0.9748);">Рисован</span>
<div class="clip" style="left:0;top:0;width:307px;height:736px"><span class="t" id="t10" style="left:255px;top:56.50px;font-size:13px;color:#444444;transform:translateX(0.40px) scaleX(1.0335);">Конструк</span></div>
<span class="t" id="t11" style="left:317px;top:56.50px;font-size:13px;color:#444444;transform:translateX(0.40px) scaleX(1.0298);">Макет</span>
<span class="t" id="t12" style="left:368px;top:56.50px;font-size:13px;color:#444444;transform:translateX(0.93px) scaleX(0.9460);">Ссылки</span>
<div class="clip" style="left:0;top:0;width:475px;height:736px"><span class="t" id="t13" style="left:424px;top:56.50px;font-size:13px;color:#444444;transform:translateX(0.91px) scaleX(0.9521);">Рассылки</span></div>
<div class="clip" style="left:0;top:0;width:535px;height:736px"><span class="t" id="t14" style="left:483px;top:56.50px;font-size:13px;color:#444444;transform:translateX(0.70px) scaleX(0.9611);">Рецензир</span></div>
<span class="t" id="t15" style="left:545px;top:56.50px;font-size:13px;color:#444444;transform:translateX(0.51px) scaleX(0.9173);">Вид</span>
<span class="t" id="t16" style="left:579px;top:56.50px;font-size:13px;color:#262626;transform:translateX(0.26px) scaleX(0.9589);-webkit-text-stroke:0.15px #262626;font-weight:bold;">Разрабо</span>
<span class="t" id="t17" style="left:641px;top:56.50px;font-size:13px;color:#444444;transform:translateX(0.16px) scaleX(0.9926);">Add-Ins</span>
<span class="t" id="t18" style="left:697px;top:56.50px;font-size:13px;color:#444444;transform:translateX(0.95px) scaleX(0.9676);">Справка</span>
<span class="t" id="t19" style="left:789px;top:56.60px;font-size:13px;color:#2b579a;transform:translateX(0.69px) scaleX(0.9756);font-weight:bold;">Поделиться</span>
<span class="t" id="t20" style="left:27px;top:121.00px;font-size:12.1px;color:#444444;transform:translateX(0.17px) scaleX(0.9535);">Visual</span>
<span class="t" id="t21" style="left:28px;top:136.70px;font-size:12.1px;color:#444444;transform:translateX(0.45px) scaleX(0.9368);">Basic</span>
<span class="t" id="t22" style="left:65px;top:121.00px;font-size:12.1px;color:#444444;transform:translateX(0.62px) scaleX(1.0466);">Макросы</span>
<span class="t" id="t23" style="left:160px;top:121.00px;font-size:12.1px;color:#b3b1af;transform:translateX(0.27px) scaleX(1.0123);">Надстройки</span>
<span class="t" id="t24" style="left:231px;top:121.00px;font-size:12.1px;color:#444444;transform:translateX(0.49px) scaleX(1.0067);">Надстройки</span>
<span class="t" id="t25" style="left:251px;top:136.70px;font-size:12.1px;color:#444444;transform:translateX(0.06px) scaleX(1.0298);">Word</span>
<span class="t" id="t26" style="left:302px;top:121.00px;font-size:12.1px;color:#444444;transform:translateX(0.70px) scaleX(1.0014);">Надстройки</span>
<span class="t" id="t27" style="left:321px;top:136.70px;font-size:12.1px;color:#444444;transform:translateX(0.92px) scaleX(1.0242);">COM</span>
<span class="t" id="t28" style="left:576px;top:121.00px;font-size:12.1px;color:#444444;transform:translateX(0.65px) scaleX(0.9811);">Область</span>
<span class="t" id="t29" style="left:545px;top:136.70px;font-size:12.1px;color:#444444;transform:translateX(0.13px) scaleX(0.9767);">сопоставления XML</span>
<span class="t" id="t30" style="left:673px;top:119.00px;font-size:12.1px;color:#444444;transform:translateX(0.56px) scaleX(1.0036);">Защитить</span>
<span class="t" id="t31" style="left:753px;top:121.00px;font-size:12.1px;color:#444444;transform:translateX(0.63px) scaleX(1.0153);">Шаблон</span>
<span class="t" id="t32" style="left:746px;top:136.70px;font-size:12.1px;color:#444444;transform:translateX(0.45px) scaleX(0.9894);">документа</span>
<span class="t" id="t33" style="left:391px;top:86.70px;font-size:13.8px;color:#a2a2a2;transform:translateX(0.06px) scaleX(0.9562);">Aa</span>
<span class="t" id="t34" style="left:415px;top:86.70px;font-size:13.8px;color:#b6b6b6;transform:translateX(0.06px) scaleX(0.9130);">Aa</span>
<span class="t" id="t35" style="left:71px;top:159.70px;font-size:12.1px;color:#444444;transform:translateX(0.40px) scaleX(0.9681);">Код</span>
<span class="t" id="t36" style="left:232px;top:159.70px;font-size:12.1px;color:#444444;transform:translateX(0.37px) scaleX(0.9842);">Надстройки</span>
<span class="t" id="t37" style="left:396px;top:159.70px;font-size:12.1px;color:#444444;transform:translateX(0.49px) scaleX(0.9435);">Элементы управления</span>
<span class="t" id="t38" style="left:558px;top:159.70px;font-size:12.1px;color:#444444;transform:translateX(0.85px) scaleX(0.9455);">Сопоставление</span>
<span class="t" id="t39" style="left:749px;top:159.70px;font-size:12.1px;color:#444444;transform:translateX(0.69px) scaleX(0.9887);">Шаблоны</span>
<span class="t" id="t40" style="left:61px;top:312.40px;font-size:19.5px;color:#2f5496;transform:translateX(0.26px) scaleX(0.9788);-webkit-text-stroke:0.3px #fff;">Заголовок для раскрывающегося текста</span>
<span class="t" id="t41" style="left:62px;top:339.70px;font-size:12.7px;color:#000;transform:translateX(0.00px) scaleX(1.0820);">Текст под заголовком</span>
<span class="t" id="t42" style="left:61px;top:399.00px;font-size:13.2px;color:#6c6c6c;transform:translateX(0.33px) scaleX(1.0310);">Выберите элемент.</span>
<span class="t" id="t43" style="left:550px;top:193.00px;font-size:19.5px;color:#2b579a;transform:translateX(0.44px) scaleX(1.0549);-webkit-text-stroke:0.25px #e6e6e6;">Ограничить редактирова...</span>
<span class="t" id="t44" style="left:551px;top:224.00px;font-size:12.5px;color:#3b3b3b;transform:translateX(0.61px) scaleX(0.9324);font-weight:bold;">1. Ограничения на форматирование</span>
<span class="t" id="t45" style="left:577px;top:244.00px;font-size:12.5px;color:#3a3a3a;transform:translateX(0.07px) scaleX(0.9373);-webkit-text-stroke:0.18px #3a3a3a;">Ограничить набор разрешенных стилей</span>
<span class="t" id="t46" style="left:559px;top:264.00px;font-size:12.5px;color:#2b579a;transform:translateX(0.49px) scaleX(0.9232);">Параметры...</span>
<span class="t" id="t47" style="left:551px;top:288.00px;font-size:12.5px;color:#3b3b3b;transform:translateX(1.00px) scaleX(0.9417);font-weight:bold;">2. Ограничения на редактирование</span>
<span class="t" id="t48" style="left:576px;top:307.60px;font-size:12.5px;color:#3a3a3a;transform:translateX(0.64px) scaleX(0.9325);-webkit-text-stroke:0.18px #3a3a3a;">Разрешить только указанный способ редактирования</span>
<span class="t" id="t49" style="left:577px;top:321.00px;font-size:12.5px;color:#3a3a3a;transform:translateX(0.45px) scaleX(0.9145);-webkit-text-stroke:0.18px #3a3a3a;">документа:</span>
<span class="t" id="t50" style="left:563px;top:343.10px;font-size:12.5px;color:#555;transform:translateX(0.73px) scaleX(0.9453);-webkit-text-stroke:0.12px #555;">Только чтение</span>
<span class="t" id="t51" style="left:551px;top:390.00px;font-size:12.5px;color:#3b3b3b;transform:translateX(0.72px) scaleX(0.9650);font-weight:bold;">3. Включение защиты</span>
<span class="t" id="t52" style="left:559px;top:409.00px;font-size:12.5px;color:#3a3a3a;transform:translateX(0.63px) scaleX(0.9319);-webkit-text-stroke:0.18px #3a3a3a;">Применить указанные настройки? (Позднее их можно</span>
<span class="t" id="t53" style="left:559px;top:422.00px;font-size:12.5px;color:#3a3a3a;transform:translateX(0.84px) scaleX(0.9318);-webkit-text-stroke:0.18px #3a3a3a;">будет отключить.)</span>
<span class="t" id="t54" style="left:568px;top:443.50px;font-size:12.5px;color:#b4b4b4;transform:translateX(0.90px) scaleX(0.9143);">Да, включить защиту</span>
<span class="t" id="t55" style="left:550px;top:648.60px;font-size:12.5px;color:#3b3b3b;transform:translateX(1.00px) scaleX(0.9459);font-weight:bold;">См. также</span>
<span class="t" id="t56" style="left:559px;top:669.60px;font-size:12.5px;color:#2b579a;transform:translateX(0.76px) scaleX(0.9464);">Ограничить разрешение...</span>
<span class="t" id="t57" style="left:20px;top:709.20px;font-size:12.0px;color:#444444;transform:translateX(0.71px) scaleX(0.8835);">Раздел: 1</span>
<span class="t" id="t58" style="left:83px;top:709.20px;font-size:12.0px;color:#444444;transform:translateX(0.71px) scaleX(0.9394);">Страница 1 из 1</span>
<span class="t" id="t59" style="left:185px;top:709.20px;font-size:12.0px;color:#444444;transform:translateX(0.59px) scaleX(0.9499);">Строка: 4</span>
<span class="t" id="t60" style="left:255px;top:709.20px;font-size:12.0px;color:#444444;transform:translateX(0.33px) scaleX(0.9268);">Слово 2 из 9</span>
<span class="t" id="t61" style="left:376px;top:709.20px;font-size:12.0px;color:#444444;transform:translateX(0.65px) scaleX(0.9897);">русский</span>
<span class="t" id="t62" style="left:491px;top:709.20px;font-size:12.0px;color:#444444;transform:translateX(0.17px) scaleX(0.9694);">Фокусировка</span>
<span class="t" id="t63" style="left:837px;top:709.20px;font-size:12.0px;color:#444444;transform:translateX(0.55px) scaleX(0.9418);">100 %</span>
<!-- status bar icons -->
<svg id="ic-status" width="900" height="736" viewBox="0 0 900 736" style="left:0;top:0" fill="none" stroke="#444" stroke-width="1.1">
  <!-- proofing book -->
  <path d="M351.9 720 V710.3 Q349 708.6 345.6 708.9 V720"/>
  <path d="M351.9 710.3 Q354.8 708.6 358.2 708.9 V716.5"/>
  <path d="M351.5 717.5 L354 720 L358.6 715.4" stroke-width="1.2"/>
  <!-- focus -->
  <path d="M475.6 710.2 V707.6 H478.2 M485.8 707.6 H488.4 V710.2 M475.6 717.4 V720 M488.4 717.4 V720" stroke-width="1.1"/>
  <path d="M479.6 720 V709.6 H483.6 L486 712 V720 M483.4 709.8 V712.2 H485.8" stroke-width="1.1"/>
  <!-- read mode -->
  <path d="M592.5 720 V708.6 M592.5 708.6 Q589.5 707 586.5 707.6 V720 M592.5 708.6 Q595.5 707 598.5 707.6 V720" />
  <path d="M588.2 710.6 H590.8 M588.2 712.8 H590.8 M588.2 715 H590.8 M588.2 717.2 H590.8 M594.2 710.6 H596.8 M594.2 712.8 H596.8 M594.2 715 H596.8 M594.2 717.2 H596.8" stroke-width="0.9"/>
  <!-- print layout -->
  <path d="M627.6 720 V707.6 H637.6 V720"/>
  <path d="M629.6 710.2 H635.6 M629.6 712.4 H635.6 M629.6 714.6 H635.6 M629.6 716.8 H635.6 M629.6 719 H635.6" stroke-width="0.9"/>
  <!-- web layout -->
  <path d="M667 720 V707.6 H677.4 V712.6"/>
  <path d="M669 710.2 H675.4 M669 712.4 H673.4 M669 714.6 H671.8 M669 716.8 H671.4" stroke-width="0.9"/>
  <circle cx="676.4" cy="717.6" r="3.6" fill="#f3f2f1" stroke-width="1"/>
  <path d="M672.8 717.6 H680 M676.4 714 V720" stroke-width="0.8"/>
  <ellipse cx="676.4" cy="717.6" rx="1.6" ry="3.6" stroke-width="0.8"/>
  <!-- zoom slider -->
  <path d="M699.4 713.9 H706.6" stroke-width="1"/>
  <path d="M712 714.3 H811.6" stroke="#8a8a8a" stroke-width="1"/>
  <rect x="760.4" y="708.4" width="4.8" height="11.6" fill="#777" stroke="none"/>
  <path d="M817 713.9 H825 M821 710 V718" stroke-width="1"/>
</svg>
<!-- red highlight frame -->
<svg id="redframe" width="900" height="736" viewBox="0 0 900 736" style="left:0;top:0;filter:drop-shadow(0.6px 2px 2.8px rgba(0,0,0,0.62))" fill="none">
  <rect x="540.85" y="181.65" width="339.5" height="285.5" rx="7.6" ry="7.6" stroke="#fe0000" stroke-width="4.5"/>
</svg>
<!-- black frame on top (clips anything overflowing the window) -->
<div style="left:0;top:0;width:900px;height:16px;background:#000"></div>
<div style="left:0;top:720px;width:900px;height:16px;background:#000"></div>
<div style="left:0;top:0;width:16px;height:736px;background:#000"></div>
<div style="left:884px;top:0;width:16px;height:736px;background:#000"></div>

</div>
</body></html>
